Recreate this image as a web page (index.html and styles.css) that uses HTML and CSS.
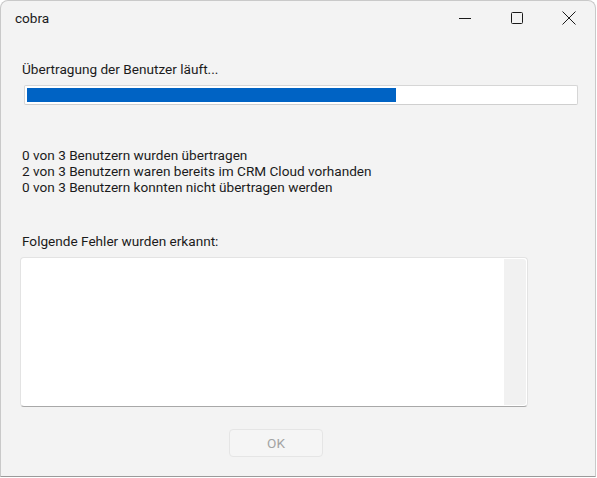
FILE: index.html
```html
<!DOCTYPE html>
<html lang="de">
<head>
<meta charset="utf-8">
<title>cobra</title>
<link rel="stylesheet" href="styles.css">
</head>
<body>
<div class="window">
  <div class="titlebar">
    <span class="title">cobra</span>
    <div class="caption">
      <button class="cap-btn" aria-label="Minimieren">
        <svg width="12" height="12" viewBox="0 0 12 12"><path d="M0 6.5h12" stroke="#1a1a1a" stroke-width="1"/></svg>
      </button>
      <button class="cap-btn" aria-label="Maximieren">
        <svg width="12" height="12" viewBox="0 0 12 12"><rect x="0.5" y="0.5" width="11" height="11" rx="1" fill="none" stroke="#1a1a1a" stroke-width="1"/></svg>
      </button>
      <button class="cap-btn" aria-label="Schließen">
        <svg width="14" height="14" viewBox="0 0 14 14"><path d="M0.5 0.5l13 13M13.5 0.5l-13 13" stroke="#1a1a1a" stroke-width="1"/></svg>
      </button>
    </div>
  </div>

  <div class="content">
    <div class="label">Übertragung der Benutzer läuft...</div>
    <div class="progress"><div class="progress-fill" style="width: 67.4%"></div></div>

    <div class="status">
      <div>0 von 3 Benutzern wurden übertragen</div>
      <div>2 von 3 Benutzern waren bereits im CRM Cloud vorhanden</div>
      <div>0 von 3 Benutzern konnten nicht übertragen werden</div>
    </div>

    <div class="label errors-label">Folgende Fehler wurden erkannt:</div>
    <div class="errors">
      <div class="errors-body"></div>
      <div class="scroll-track"></div>
    </div>

    <div class="actions">
      <button class="btn" disabled>OK</button>
    </div>
  </div>
</div>
</body>
</html>
```

FILE: styles.css
```css
html, body {
  margin: 0;
  padding: 0;
  background: #ffffff;
}

body {
  font-family: Roboto, "Noto Sans", sans-serif;
  font-size: 13.6px;
  color: #1b1b1b;
}

.window {
  width: 594px;
  height: 475px;
  background: #f3f3f3;
  border: 1px solid #c9c9c9;
  border-bottom-color: #9a9a9a;
  border-radius: 8px 8px 0 0;
  display: flex;
  flex-direction: column;
}

.titlebar {
  height: 33px;
  display: flex;
  align-items: center;
  justify-content: space-between;
}

.title {
  padding-left: 14px;
  line-height: 16px;
}

.caption {
  display: flex;
  height: 100%;
}

.cap-btn {
  width: 52px;
  height: 100%;
  border: 0;
  padding: 0;
  background: transparent;
  display: flex;
  align-items: center;
  justify-content: center;
}

.content {
  padding-left: 21px;
  display: flex;
  flex-direction: column;
  align-items: flex-start;
}

.label {
  line-height: 16px;
  margin-top: 27px;
}

.progress {
  margin-top: 8px;
  margin-left: 2px;
  width: 548px;
  height: 14px;
  padding: 2px;
  border: 1px solid #d6d6d6;
  border-bottom-color: #cfcfcf;
  border-radius: 2px;
  background: #ffffff;
}

.progress-fill {
  height: 100%;
  background: #0063c4;
}

.status {
  margin-top: 42px;
  line-height: 16px;
}

.errors-label {
  margin-top: 38px;
}

.errors {
  margin-top: 8px;
  margin-left: -2px;
  width: 506px;
  height: 148px;
  background: #ffffff;
  border: 1px solid #e3e3e3;
  border-bottom-color: #a8a8a8;
  border-radius: 4px;
  display: flex;
}

.errors-body {
  flex: 1;
}

.scroll-track {
  width: 22px;
  margin: 1px 1px 1px 0;
  background: #f1f1f1;
  border-radius: 0 3px 3px 0;
}

.actions {
  margin-top: 22px;
  margin-left: 207px;
}

.btn {
  width: 94px;
  height: 28px;
  border: 1px solid #e5e5e5;
  border-radius: 4px;
  background: #f5f5f5;
  color: #a3a3a3;
  font-family: inherit;
  font-size: 13.6px;
  padding: 0;
}
```
